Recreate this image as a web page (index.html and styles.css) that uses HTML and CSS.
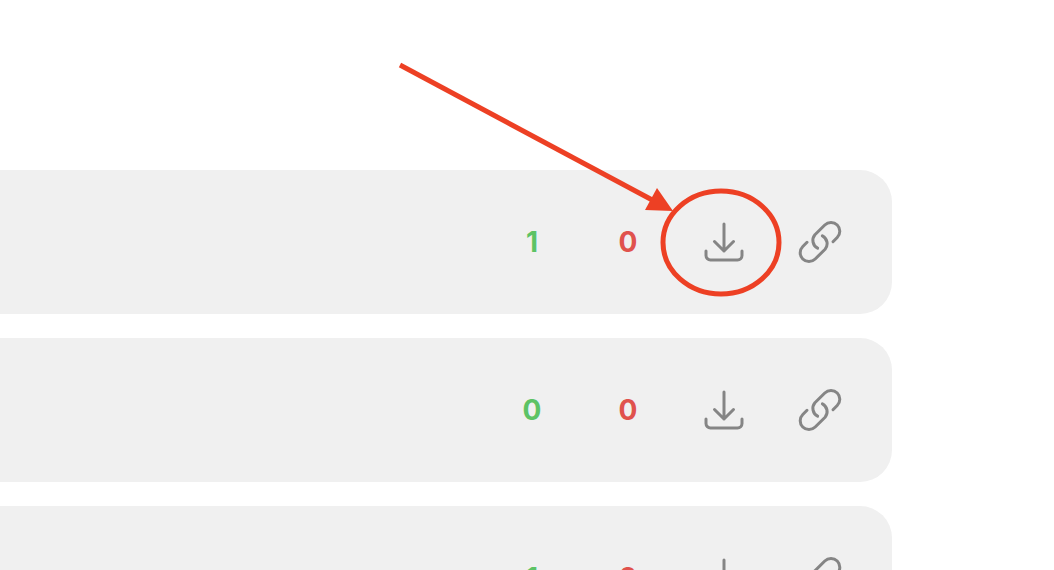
FILE: index.html
```html
<!DOCTYPE html>
<html lang="en">
<head>
<meta charset="utf-8">
<meta name="viewport" content="width=device-width, initial-scale=1">
<title>Downloads</title>
<link rel="stylesheet" href="styles.css">
</head>
<body>
<svg class="sprite" aria-hidden="true">
  <symbol id="download" viewBox="0 0 48 48">
    <path d="M24 6V33M14.5 23.5L24 33L33.5 23.5M6 33V37.5A4.5 4.5 0 0 0 10.5 42H37.5A4.5 4.5 0 0 0 42 37.5V33"/>
  </symbol>
  <symbol id="link" viewBox="0 0 48 48">
    <path d="M37 23.7L41.2 19.5A8.8 8.8 0 0 0 28.8 7L18.9 16.8A8.8 8.8 0 0 0 21.6 30.2"/>
    <path d="M11 24.3L6.8 28.5A8.8 8.8 0 0 0 19.2 41L29.1 31.2A8.8 8.8 0 0 0 26.4 17.8"/>
  </symbol>
</svg>
<main class="page">
  <ul class="list">
    <li class="row">
      <span class="count up">1</span>
      <span class="count down">0</span>
      <div class="marked">
        <button class="action" type="button" aria-label="Download"><svg class="icon"><use href="#download"/></svg></button>
        <svg class="callout" viewBox="396 60 388 240" aria-hidden="true">
          <path class="callout-line" d="M400 65L656 202"/>
          <path class="callout-head" d="M673 211L657 188L645 210Z"/>
          <ellipse class="callout-line" cx="721" cy="242.5" rx="58" ry="51.5"/>
        </svg>
      </div>
      <a class="action" href="#" aria-label="Copy link"><svg class="icon"><use href="#link"/></svg></a>
    </li>
    <li class="row">
      <span class="count up">0</span>
      <span class="count down">0</span>
      <button class="action" type="button" aria-label="Download"><svg class="icon"><use href="#download"/></svg></button>
      <a class="action" href="#" aria-label="Copy link"><svg class="icon"><use href="#link"/></svg></a>
    </li>
    <li class="row">
      <span class="count up">1</span>
      <span class="count down">0</span>
      <button class="action" type="button" aria-label="Download"><svg class="icon"><use href="#download"/></svg></button>
      <a class="action" href="#" aria-label="Copy link"><svg class="icon"><use href="#link"/></svg></a>
    </li>
  </ul>
</main>
</body>
</html>
```

FILE: styles.css
```css
* {
  box-sizing: border-box;
}

body {
  margin: 0;
  background: #fff;
  font-family: Inter, "Liberation Sans", sans-serif;
}

.sprite {
  display: none;
}

.page {
  height: 100vh;
  overflow: hidden;
  padding: 170px 162px 0 0;
}

.list {
  display: flex;
  flex-direction: column;
  gap: 24px;
  margin: 0;
  padding: 0;
  list-style: none;
}

.row {
  display: flex;
  align-items: center;
  justify-content: flex-end;
  gap: 48px;
  padding: 48px;
  border-radius: 0 32px 32px 0;
  background: #f0f0f0;
}

.count {
  width: 48px;
  font-size: 28px;
  font-weight: 700;
  line-height: 48px;
  text-align: center;
}

.up {
  color: #5dc365;
}

.down {
  color: #e0524d;
}

.action {
  display: block;
  width: 48px;
  height: 48px;
  padding: 0;
  border: 0;
  background: none;
  color: #858585;
  cursor: pointer;
}

.icon {
  display: block;
  width: 48px;
  height: 48px;
  fill: none;
  stroke: currentColor;
  stroke-width: 3;
  stroke-linecap: round;
  stroke-linejoin: round;
}

.marked {
  position: relative;
}

/* Arrow and ring drawn over the first download button */
.callout {
  position: absolute;
  top: -158px;
  right: -36px;
  width: 388px;
  height: 240px;
  pointer-events: none;
}

.callout-line {
  fill: none;
  stroke: #ed4024;
  stroke-width: 5;
}

.callout-head {
  fill: #ed4024;
}
```
